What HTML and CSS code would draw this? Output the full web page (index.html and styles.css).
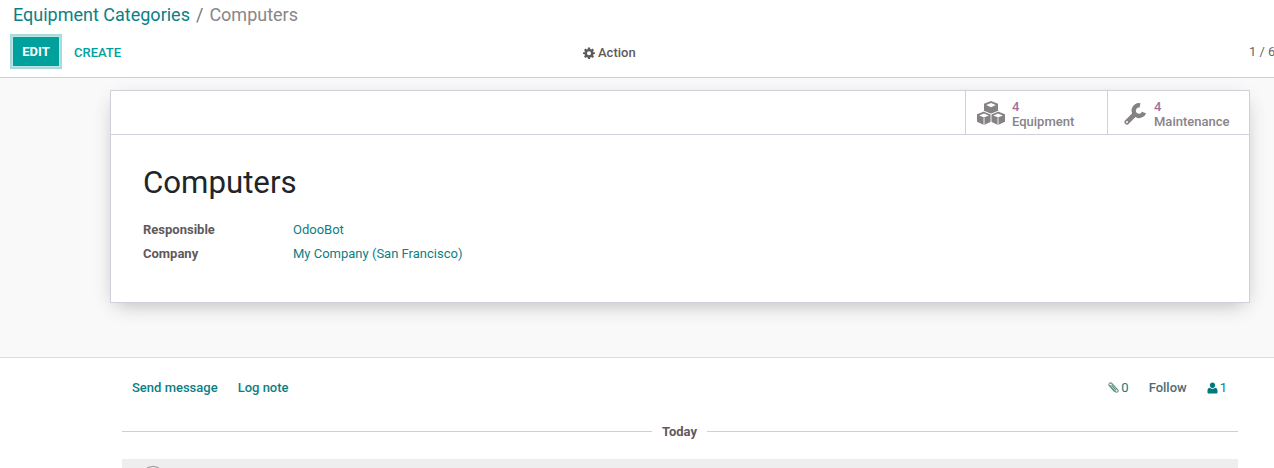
FILE: index.html
```html
<!DOCTYPE html>
<html lang="en">
<head>
<meta charset="utf-8">
<title>Computers</title>
<link rel="stylesheet" href="styles.css">
</head>
<body>
<header class="control">
  <div class="crumbs"><a class="crumb-link">Equipment Categories</a><span class="crumb-sep">/</span><span class="crumb-cur">Computers</span></div>
  <div class="toolbar">
    <div class="buttons">
      <button class="btn-edit">EDIT</button>
      <button class="btn-create">CREATE</button>
    </div>
    <div class="action">
      <svg class="gear" viewBox="0 0 24 24"><path fill="#5f5a5c" fill-rule="evenodd" d="M10 1h4l.6 3.100 1.900.8 2.600-1.800 2.800 2.800-1.800 2.600.8 1.900L24 11v3l-3.100.6-.8 1.900 1.800 2.600-2.800 2.800-2.600-1.800-1.900.8L14 24h-4l-.6-3.100-1.900-.8-2.600 1.800-2.800-2.800 1.800-2.600-.8-1.900L0 14v-3l3.100-.6.8-1.900-1.800-2.600 2.800-2.800 2.600 1.800 1.900-.8zM12 8.500a4 4 0 1 0 0 8 4 4 0 0 0 0-8z"/></svg>
      <span>Action</span>
    </div>
    <div class="pager">1 / 6</div>
  </div>
</header>
<main class="sheet-bg">
  <section class="sheet">
    <div class="stats">
      <div class="stat">
        <svg class="stat-icon cubes" viewBox="0 0 28 24"><g fill="#858184"><path d="M14 0l7 2.800v7.400L14 13 7 10.200V2.800z"/><path d="M7 10.400l7 2.800v7.600L7 24 0 20.800v-7.600z"/><path d="M21 10.400l7 2.800v7.600L21 24l-7-3.200v-7.600z"/></g><g fill="#fff"><path d="M14 6.200l4.800-2.200L14 2 9.200 4z"/><path d="M7 16.600l4.800-2.200L7 12.400l-4.800 2z"/><path d="M21 16.600l4.800-2.200-4.800-2-4.800 2z"/></g><path fill="none" stroke="#fff" stroke-width=".9" d="M7 10.300l7 2.800 7-2.800M14 13v8M7 17v7M21 17v7"/></svg>
        <div class="stat-text"><span class="stat-num">4</span><span class="stat-label">Equipment</span></div>
      </div>
      <div class="stat">
        <svg class="stat-icon wrench" viewBox="0 0 22 22"><path fill="none" stroke="#858184" stroke-width="5" stroke-linecap="round" d="M3 19L10.500 11.500"/><path fill="none" stroke="#858184" stroke-width="4.400" d="M16 2.400A5.300 5.300 0 1 0 20 9.500"/><circle cx="3" cy="19" r="1" fill="#fff"/></svg>
        <div class="stat-text"><span class="stat-num">4</span><span class="stat-label">Maintenance</span></div>
      </div>
    </div>
    <div class="sheet-body">
      <h1 class="title">Computers</h1>
      <div class="fields">
        <span class="field-label">Responsible</span><a class="field-link">OdooBot</a>
        <span class="field-label">Company</span><a class="field-link">My Company (San Francisco)</a>
      </div>
    </div>
  </section>
</main>
<section class="chatter">
  <div class="chatter-top">
    <div class="chatter-left"><a>Send message</a><a>Log note</a></div>
    <div class="chatter-right">
      <span class="clip-count"><svg class="clip" viewBox="0 0 14 14"><path fill="none" stroke="#5e8f7e" stroke-width="1.200" d="M3.200 3.800l6.500 7.400c.9 1 2.200.9 2.800.2.700-.7.600-1.700-.2-2.600L5.600 1.700c-.7-.7-1.800-.8-2.700-.1-.9.700-1 1.900-.3 2.700l6.200 7M5.200 3.400l5.500 6.400"/></svg>0</span>
      <a class="follow">Follow</a>
      <span class="followers"><svg class="user" viewBox="0 0 12 13"><path fill="#00787c" d="M6 .5c1.700 0 2.900 1.400 2.900 3.100S7.700 6.700 6 6.700 3.100 5.300 3.100 3.600 4.300.5 6 .5zM3.100 6.300c.7.800 1.700 1.200 2.900 1.200s2.200-.4 2.900-1.200c1.700.2 2.600 1.500 2.600 3.700v1.200c0 .9-.6 1.400-1.500 1.400H2c-.9 0-1.500-.5-1.500-1.400V10c0-2.200.9-3.500 2.600-3.700z"/></svg>1</span>
    </div>
  </div>
  <div class="today"><span>Today</span></div>
  <div class="message"><span class="avatar"></span></div>
</section>
</body>
</html>
```
FILE: styles.css
```css
* { box-sizing: border-box; }
html, body { margin: 0; height: 468px; overflow: hidden; }
body {
  width: 1274px;
  background: #fff;
  font-family: Roboto, "Noto Sans", sans-serif;
  font-size: 13px;
  color: #4c4c4c;
}
a { color: #0a8084; }

.control { height: 78px; border-bottom: 1px solid #cfcfd3; padding-left: 13px; background: #fff; }
.crumbs { height: 29px; display: flex; align-items: center; font-size: 18px; line-height: 30px; margin-bottom: 5px; }
.crumb-link { color: #0a8084; }
.crumb-sep { color: #777; margin: 0 6px; }
.crumb-cur { color: #8a8588; }
.toolbar { position: relative; display: flex; align-items: flex-start; }
.buttons { display: flex; align-items: center; height: 35px; }
.btn-edit {
  width: 52px; height: 35px; margin-left: -3px;
  background: #00a09d; color: #fff;
  border: 2px solid #a6dcdb; outline: 1px solid #bfe6e5; outline-offset: -3px;
  font: 700 13px Roboto, sans-serif; padding: 0;
}
.btn-create {
  background: none; border: 0; padding: 1px 0 0; margin-left: 12px;
  color: #00a09d; font: 500 13px Roboto, sans-serif;
}
.action {
  display: flex; align-items: center; gap: 3px;
  position: absolute; left: 570px; top: 1px; height: 35px;
  font-weight: 500; color: #5f5a5c; font-size: 13px;
}
.gear { width: 12px; height: 12px; }
.pager { position: absolute; left: 1236px; top: 1px; line-height: 34px; white-space: nowrap; color: #666; font-size: 13px; }

.sheet-bg { height: 280px; background: #f9f9f9; border-bottom: 1px solid #dcdcdc; padding: 12px 24px 0 110px; }
.sheet {
  height: 213px; background: #fff; border: 1px solid #d0d0d8;
  box-shadow: 0 6px 20px -6px rgba(0,0,0,.3);
}
.stats { height: 44px; display: flex; justify-content: flex-end; border-bottom: 1px solid #d0d0d8; }
.stat { width: 142px; display: flex; align-items: center; border-left: 1px solid #d0d0d8; padding-left: 11px; }
.stat-icon { flex: none; }
.cubes { width: 28px; height: 24px; }
.wrench { width: 22px; height: 22px; margin-left: 5px; margin-right: 1px; margin-top: 2px; }
.stat-text { display: flex; flex-direction: column; margin-left: 7px; font-weight: 500; line-height: 15px; padding-top: 2px; }
.stat-num { color: #a0729b; }
.stat-label { color: #88838a; }

.sheet-body { padding: 28px 32px 0; }
.title { margin: 0; font-weight: 400; font-size: 31.200px; line-height: 40px; color: #212529; }
.fields { display: grid; grid-template-columns: 150px 1fr; grid-auto-rows: 24px; align-items: center; margin-top: 14px; }
.field-label { font-weight: 700; color: #5f5a5c; font-size: 13px; }
.field-link { color: #0a8084; }

.chatter { padding: 0 36px 0 122px; }
.chatter-top { height: 59px; display: flex; justify-content: space-between; align-items: center; font-weight: 500; padding: 0 11px 0 10px; }
.chatter-left { display: flex; gap: 20px; }
.chatter-right { display: flex; align-items: center; color: #0a8084; }
.clip-count { display: flex; align-items: center; gap: 2px; font-weight: 400; }
.clip { width: 12px; height: 12px; }
.follow { color: #4f6b78; margin-left: 20px; font-weight: 500; }
.followers { display: flex; align-items: center; gap: 2px; margin-left: 20px; font-weight: 400; }
.user { width: 11px; height: 12px; }
.today { display: flex; align-items: center; gap: 10px; height: 28px; font-weight: 700; color: #5f5a5c; font-size: 13px; }
.today::before, .today::after { content: ""; height: 1px; background: #d0d0d0; }
.today::before { width: 530px; }
.today::after { flex: 1; }
.message { height: 9px; overflow: hidden; margin-top: 14px; background: #eeeeef; padding: 7px 0 0 18px; }
.avatar { display: block; width: 26px; height: 26px; border-radius: 50%; background: #fff; border: 1px solid #8f8a8c; }
```
